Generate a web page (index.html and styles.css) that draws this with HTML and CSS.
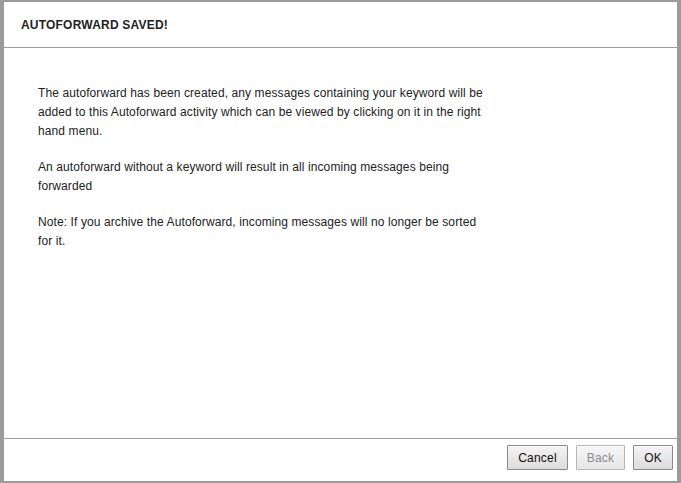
FILE: index.html
```html
<!DOCTYPE html>
<html>
<head>
<meta charset="utf-8">
<link rel="stylesheet" href="styles.css">
</head>
<body>
<div class="dialog">
  <div class="dialog-header">
    <h1 class="dialog-title">AUTOFORWARD SAVED!</h1>
  </div>
  <div class="dialog-body">
    <p>The autoforward has been created, any messages containing your keyword will be added to this Autoforward activity which can be viewed by clicking on it in the right hand menu.</p>
    <p>An autoforward without a keyword will result in all incoming messages being forwarded</p>
    <p>Note: If you archive the Autoforward, incoming messages will no longer be sorted for it.</p>
  </div>
  <div class="dialog-footer">
    <button class="btn">Cancel</button>
    <button class="btn btn-disabled" disabled>Back</button>
    <button class="btn">OK</button>
  </div>
</div>
</body>
</html>
```

FILE: styles.css
```css
html, body {
  margin: 0;
  padding: 0;
  height: 100%;
}
body {
  background: #9b9b9b;
  padding: 2px 4px 2px 4px;
  box-sizing: border-box;
  font-family: "Liberation Sans", Arial, sans-serif;
}
.dialog {
  background: #fff;
  height: 479px;
  display: flex;
  flex-direction: column;
}
.dialog-header {
  height: 46px;
  display: flex;
  align-items: center;
  padding-left: 17px;
  border-bottom: 1px solid #9d9d9d;
  box-sizing: border-box;
}
.dialog-title {
  margin: 0;
  font-size: 12px;
  font-weight: bold;
  color: #222;
  letter-spacing: 0.2px;
}
.dialog-body {
  flex: 1;
  padding: 36px 0 0 34px;
  max-width: 452px;
  color: #222;
  font-size: 12px;
  line-height: 19px;
  letter-spacing: 0.1px;
}
.dialog-body p {
  margin: 0 0 17px 0;
}
.dialog-footer {
  border-top: 1px solid #9d9d9d;
  height: 43px;
  box-sizing: border-box;
  display: flex;
  justify-content: flex-end;
  align-items: flex-start;
  gap: 8px;
  padding: 6px 4px 0 0;
}
.btn {
  height: 25px;
  padding: 0 10px;
  font-family: "Liberation Sans", Arial, sans-serif;
  font-size: 12px;
  letter-spacing: 0.2px;
  color: #111;
  background: linear-gradient(#f4f4f4, #dcdcdc);
  border: 1px solid #8a8a8a;
  border-radius: 1px;
  box-shadow: inset 0 1px 0 #fff;
}
.btn-disabled {
  color: #8c8c8c;
  border-color: #b5b5b5;
  background: linear-gradient(#f6f6f6, #e6e6e6);
}
```
